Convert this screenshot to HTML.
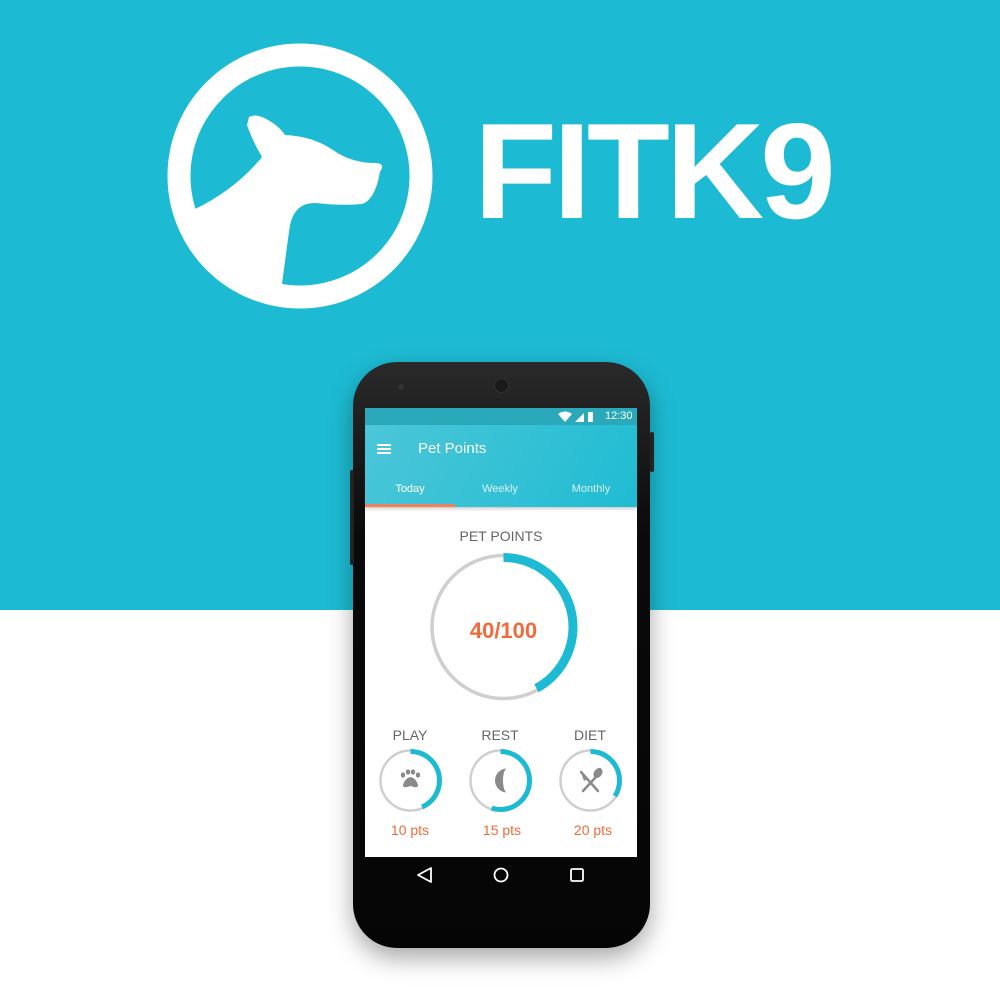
<!DOCTYPE html>
<html><head><meta charset="utf-8"><style>
html,body{margin:0;padding:0}
body{width:1000px;height:1000px;position:relative;overflow:hidden;background:#fff;font-family:"Liberation Sans",Arial,sans-serif}
.top{position:absolute;left:0;top:0;width:1000px;height:610px;background:#1cbbd3}
.title{position:absolute;left:474px;top:96px;font-size:136px;font-weight:bold;color:#fff;letter-spacing:-4px;line-height:150px}
.phone{position:absolute;left:353px;top:362px;width:297px;height:586px;border-radius:44px;background:linear-gradient(#2a2a2a,#0a0a0a 30%,#050505);box-shadow:0 10px 25px rgba(0,0,0,.35)}
.screen{position:absolute;left:365px;top:408px;width:272px;height:449px;background:#fff;overflow:hidden}
.status{position:absolute;left:0;top:0;width:272px;height:17px;background:#2aa9bb;color:#fff;font-size:11px}
.appbar{position:absolute;left:0;top:17px;width:272px;height:82px;background:linear-gradient(120deg,#4cc6d8,#1fbcd3);box-shadow:0 2px 3px rgba(0,0,0,.2)}
.tab{position:absolute;top:58px;font-size:11px;color:#d6f3f8;width:90px;text-align:center}
.c{position:absolute;color:#666;text-align:center;font-size:14px}
.o{position:absolute;color:#f26a3a;text-align:center;font-size:14px}
</style></head><body>
<div class="top"></div>
<svg style="position:absolute;left:0;top:0" width="1000" height="610">
<defs><clipPath id="cp"><circle cx="300" cy="176" r="110"/></clipPath></defs>
<circle cx="300" cy="176" r="121" fill="none" stroke="#fff" stroke-width="23"/>
<path clip-path="url(#cp)" fill="#fff" d="M249 117 Q256 113 268 120 Q280 127 285 135 Q312 136 333 150 Q350 162 372 163 Q383 162 382 168 L380 172 Q375 200 362 204 Q340 206 316 203 Q295 202 290 225 Q285 260 280 300 L150 300 L193 210 Q235 190 262 157 Q252 140 247 125 Z"/>
</svg>
<div class="title">FITK9</div>
<div class="phone"></div>
<div style="position:absolute;left:350px;top:470px;width:4px;height:95px;background:#222;border-radius:2px"></div>
<div style="position:absolute;left:650px;top:432px;width:4px;height:40px;background:#222;border-radius:2px"></div>
<div style="position:absolute;left:398px;top:384px;width:6px;height:6px;border-radius:50%;background:#333"></div>
<div style="position:absolute;left:494px;top:378px;width:13px;height:13px;border-radius:50%;background:#1a1a1a;border:1px solid #333"></div>
<div class="screen">
 <div class="status">
  <svg style="position:absolute;left:193px;top:3px" width="40" height="12"><path d="M0 3 Q7 -2 14 3 L7 11Z" fill="#fff"/><path d="M17 11 L26 2 L26 11Z" fill="#fff"/><rect x="30" y="1" width="5" height="10" fill="#fff"/></svg>
  <span style="position:absolute;left:240px;top:2px">12:30</span>
 </div>
 <div class="appbar">
  <div style="position:absolute;left:12px;top:19px;width:14px;height:2px;background:#fff;box-shadow:0 4px 0 #fff,0 8px 0 #fff"></div>
  <div style="position:absolute;left:53px;top:15px;color:#fff;font-size:15px">Pet Points</div>
  <div class="tab" style="left:0;color:#fff">Today</div>
  <div class="tab" style="left:90px">Weekly</div>
  <div class="tab" style="left:181px">Monthly</div>
  <div style="position:absolute;left:0;top:79px;width:90px;height:3px;background:#f0805a"></div>
 </div>
 <div class="c" style="left:0;width:272px;top:120px">PET POINTS</div>
 <svg style="position:absolute;left:0;top:0" width="272" height="449">
  <circle cx="138.5" cy="219" r="71.5" fill="none" stroke="#cfcfcf" stroke-width="3.5"/>
  <circle cx="138.5" cy="219" r="69.5" fill="none" stroke="#1dbad3" stroke-width="9" stroke-dasharray="184 500" transform="rotate(-90 138.5 219)"/>
  <g fill="none">
   <circle cx="45.5" cy="372.5" r="30" stroke="#cfcfcf" stroke-width="2.5"/>
   <circle cx="45.5" cy="372.5" r="29" stroke="#1dbad3" stroke-width="5" stroke-dasharray="79 300" transform="rotate(-90 45.5 372.5)"/>
   <circle cx="135.5" cy="372.5" r="30" stroke="#cfcfcf" stroke-width="2.5"/>
   <circle cx="135.5" cy="372.5" r="29" stroke="#1dbad3" stroke-width="5" stroke-dasharray="100 300" transform="rotate(-90 135.5 372.5)"/>
   <circle cx="225.5" cy="372.5" r="30" stroke="#cfcfcf" stroke-width="2.5"/>
   <circle cx="225.5" cy="372.5" r="29" stroke="#1dbad3" stroke-width="5" stroke-dasharray="62 300" transform="rotate(-90 225.5 372.5)"/>
  </g>
  <g fill="#8a8a8a">
   <ellipse cx="38" cy="367" rx="2.2" ry="2.6"/><ellipse cx="43" cy="364" rx="2.2" ry="2.6"/><ellipse cx="48" cy="364" rx="2.2" ry="2.6"/><ellipse cx="53" cy="367" rx="2.2" ry="2.6"/>
   <path d="M45.5 369 Q51 370 53 377 Q53 380 49 379 L45.5 378 L42 379 Q38 380 38 377 Q40 370 45.5 369Z"/>
   <path d="M142 360.5 A12 12 0 0 0 142 384.5 A4 12 0 0 1 142 360.5Z"/>
  </g>
  <g stroke="#8a8a8a" stroke-width="2.5" stroke-linecap="round">
   <line x1="216" y1="364" x2="233" y2="383"/><line x1="230" y1="370" x2="218" y2="383"/>
  </g>
  <ellipse cx="233" cy="365" rx="4" ry="5.5" fill="#8a8a8a" transform="rotate(35 233 365)"/>
  <path d="M216 364 L222 371 L219 373 Z" fill="#8a8a8a"/>
 </svg>
 <div class="o" style="left:0;width:277px;top:210px;font-size:22px;font-weight:bold">40/100</div>
 <div class="c" style="left:0;width:90px;top:319px">PLAY</div>
 <div class="c" style="left:90px;width:90px;top:319px">REST</div>
 <div class="c" style="left:180px;width:90px;top:319px">DIET</div>
 <div class="o" style="left:0;width:90px;top:414px">10 pts</div>
 <div class="o" style="left:92px;width:90px;top:414px">15 pts</div>
 <div class="o" style="left:183px;width:90px;top:414px">20 pts</div>
</div>
<svg style="position:absolute;left:410px;top:864px" width="180" height="22" fill="none" stroke="#fff" stroke-width="1.8">
 <path d="M21 4 L8 11 L21 18Z" stroke-linejoin="round"/>
 <circle cx="91" cy="11" r="6.5"/>
 <rect x="161" y="5" width="12" height="12" rx="1.5"/>
</svg>
</body></html>
